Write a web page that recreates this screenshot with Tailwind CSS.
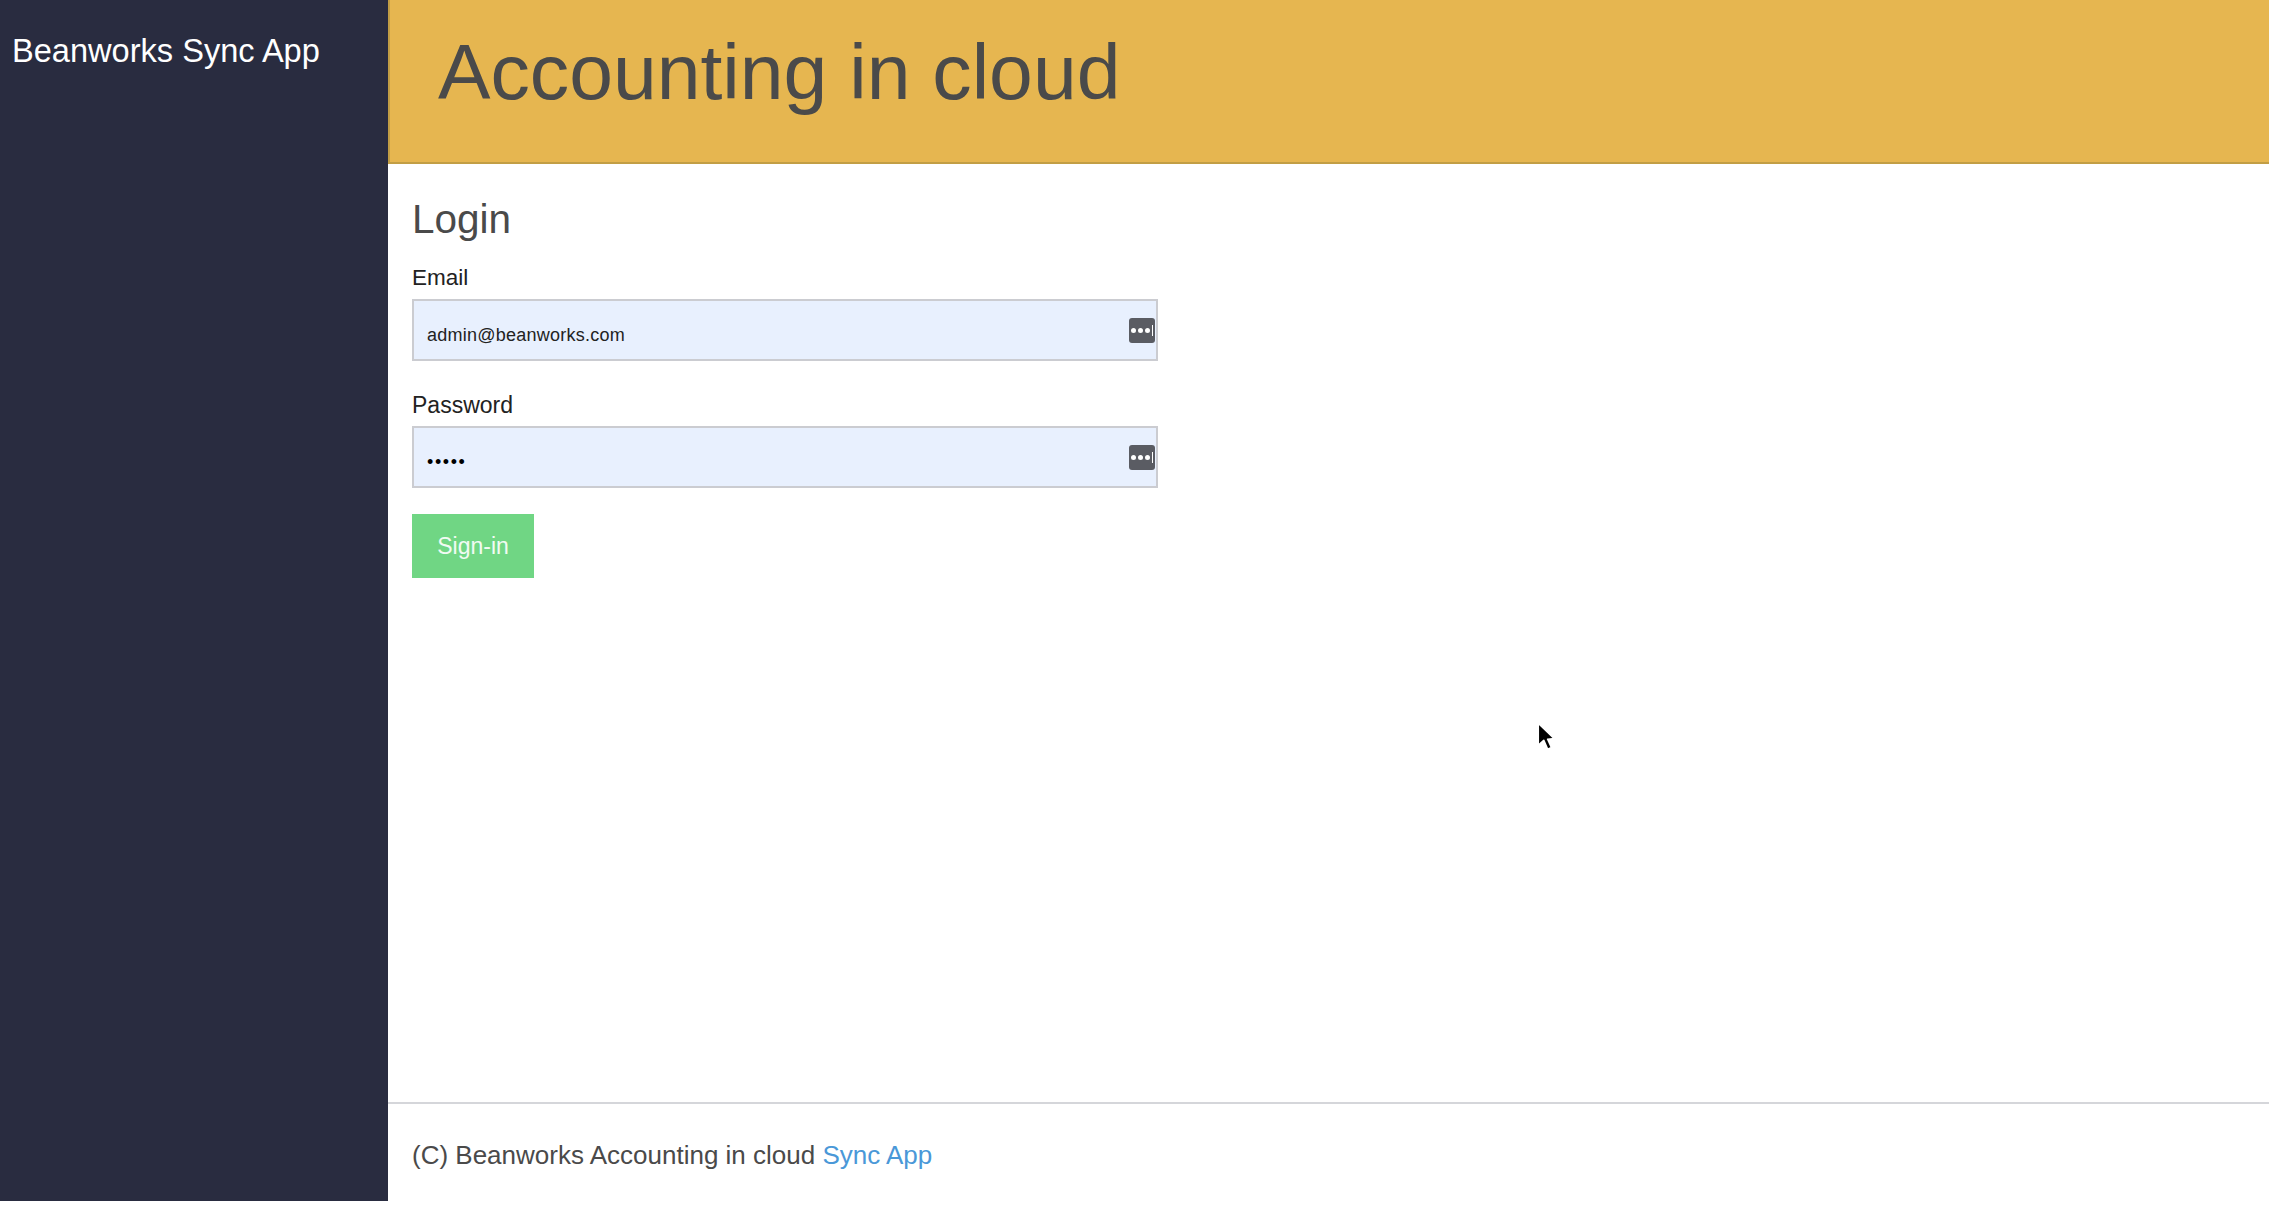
<!DOCTYPE html>
<html lang="en">
<head>
  <meta charset="UTF-8" />
  <title>Beanworks Sync App</title>
  <script src="https://cdn.jsdelivr.net/npm/@tailwindcss/browser@4"></script>
</head>
<body class="bg-white font-['Liberation_Sans',Arial,sans-serif] overflow-hidden">
  <div class="relative flex h-[1201px] w-[2269px]">
    <!-- sidebar -->
    <aside class="w-[388px] shrink-0 bg-[#292c40] pl-3 pt-[31px]">
      <a class="text-[32.6px] leading-[40px] text-white">Beanworks Sync App</a>
    </aside>

    <main class="flex flex-1 flex-col">
      <header class="h-[164px] border-b-2 border-l-2 border-[#c29e45] bg-[#e6b650] pl-[48px] pt-[28px]">
        <h1 class="text-[78.7px] leading-[88px] text-[#4a4a4a]">Accounting in cloud</h1>
      </header>

      <section class="flex-1 px-6 pt-[30px]">
        <h2 class="text-[40.5px] leading-[50px] text-[#4a4a4a]">Login</h2>
        <form class="w-[746px]">
          <label class="mt-[18px] block text-[22.5px] leading-[32px] text-[#222]">Email</label>
          <div class="relative mt-[5px]">
            <input type="text" value="admin@beanworks.com" class="h-[62px] w-full border-2 border-[#cbccd1] bg-[#e8f0fe] pl-[13px] pt-[10px] text-[18px] tracking-[0.25px] text-[#222]" />
            <span class="absolute right-[3px] top-[19px] flex h-[25px] w-[26px] items-center justify-center gap-[2px] rounded-[3px] bg-[#5a5c63]">
              <i class="size-[5px] rounded-full bg-white"></i><i class="size-[5px] rounded-full bg-white"></i><i class="size-[5px] rounded-full bg-white"></i><i class="h-[11px] w-[1px] bg-white"></i>
            </span>
          </div>

          <label class="mt-[28px] block text-[23px] leading-[32px] text-[#222]">Password</label>
          <div class="relative mt-[5px]">
            <input type="password" value="admin" class="h-[62px] w-full border-2 border-[#cbccd1] bg-[#e8f0fe] pl-[13px] pt-[10px] text-[18px] tracking-[1.6px] text-black" />
            <span class="absolute right-[3px] top-[19px] flex h-[25px] w-[26px] items-center justify-center gap-[2px] rounded-[3px] bg-[#5a5c63]">
              <i class="size-[5px] rounded-full bg-white"></i><i class="size-[5px] rounded-full bg-white"></i><i class="size-[5px] rounded-full bg-white"></i><i class="h-[11px] w-[1px] bg-white"></i>
            </span>
          </div>

          <button type="button" class="mt-[26px] h-[64px] w-[122px] bg-[#70d684] text-[23px] text-white/90">Sign-in</button>
        </form>
      </section>

      <footer class="h-[99px] border-t-2 border-[#d5d6da] pl-6 pt-[35px] text-[26px] leading-[32px] text-[#4a4a4a]">
        (C) Beanworks Accounting in cloud <a class="text-[#4a98d8]">Sync App</a>
      </footer>
    </main>

    <!-- mouse pointer -->
    <svg class="absolute left-[1536px] top-[722px]" width="20" height="30" viewBox="0 0 18 27">
      <path d="M2 1 L2 21 L7 16.5 L10.5 24.5 L14 23 L10.5 15.5 L16.5 15 Z" fill="#000" stroke="#fff" stroke-width="1.5" stroke-linejoin="round"/>
    </svg>
  </div>
</body>
</html>
